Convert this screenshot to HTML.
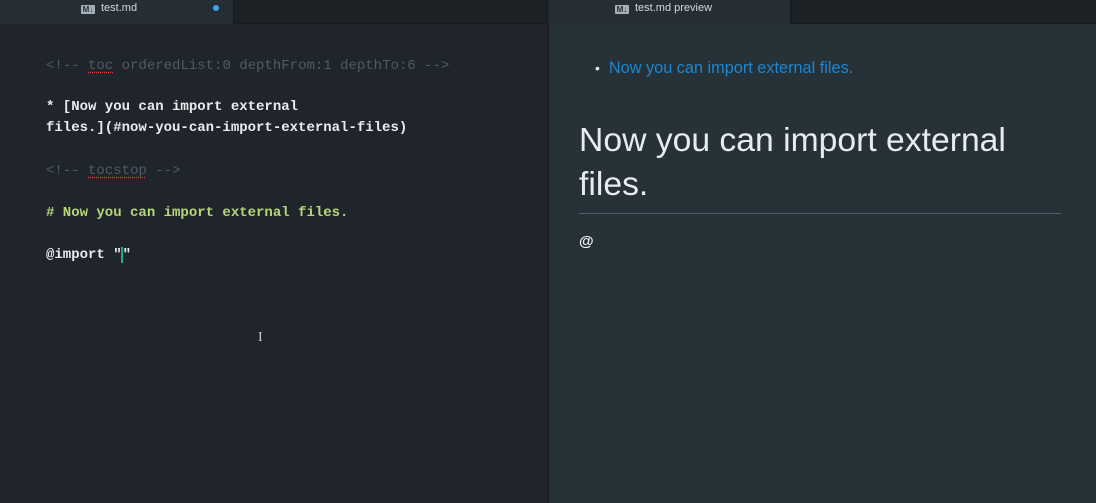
<!DOCTYPE html>
<html><head><style>
body{margin:0;width:1096px;height:503px;overflow:hidden;background:#1f252b;font-family:"Liberation Sans",sans-serif;position:relative}
.tabbar{position:absolute;top:0;height:23px;background:#1c2126;border-bottom:1px solid #161a1e}
.tab{position:absolute;top:0;height:24px;background:#252e35;color:#d4d9dd;font-size:11px;line-height:17px}
.ico{display:inline-block;width:14px;height:9px;background:#a6b0b8;border-radius:1px;vertical-align:-1px;margin-right:6px;color:#252e35;font-size:8px;line-height:9px;font-weight:bold;text-align:center}
.ed{position:absolute;left:0;top:24px;width:548px;height:479px;background:#1f252b}
.code{position:absolute;left:46px;font-family:"Liberation Mono",monospace;font-size:14px;white-space:pre;font-weight:bold}
.pv{position:absolute;left:548px;top:24px;width:548px;height:479px;background:#263238;border-left:1px solid #161a1e}
.cm{color:#4c5c68;font-weight:normal}
.sp{text-decoration:underline dotted #d23b3b;text-underline-offset:3px}
</style></head><body>
<div class="ed"></div>
<div class="tabbar" style="left:0;width:548px"></div>
<div class="tab" style="left:0;width:233px;border-right:1px solid #161a1e"><span style="position:absolute;left:81px;top:0"><span class="ico">M↓</span>test.md</span><span style="position:absolute;left:213px;top:5px;width:6px;height:6px;border-radius:3px;background:#3da5e8"></span></div>
<div class="code cm" style="top:58px">&lt;!-- <span class="sp">toc</span> orderedList:0 depthFrom:1 depthTo:6 --&gt;</div>
<div class="code" style="top:99px;color:#e8ecef">* [Now you can import external</div>
<div class="code" style="top:120px;color:#e8ecef">files.](#now-you-can-import-external-files)</div>
<div class="code cm" style="top:163px">&lt;!-- <span class="sp">tocstop</span> --&gt;</div>
<div class="code" style="top:205px;color:#b5d67a"># Now you can import external files.</div>
<div class="code" style="top:247px;color:#e8ecef">@import "<span style="border-left:2px solid #1fa898;margin-left:-1px"></span>"</div>
<div style="position:absolute;left:258px;top:330px;color:#c8ccd0;font-size:14px;font-family:'Liberation Serif',serif">I</div>
<div class="pv"></div>
<div class="tabbar" style="left:549px;width:547px"></div>
<div class="tab" style="left:549px;width:241px;border-right:1px solid #161a1e"><span style="position:absolute;left:66px;top:0"><span class="ico">M↓</span>test.md preview</span></div>
<div style="position:absolute;left:595px;top:59px;color:#1c86d1;font-size:16.3px"><span style="color:#e0e4e8;margin-right:9px;font-size:14px">•</span>Now you can import external files.</div>
<div style="position:absolute;left:579px;top:118px;color:#e8ecef;font-size:33.7px;line-height:44px;width:470px">Now you can import external files.</div>
<div style="position:absolute;left:579px;top:213px;width:482px;height:1px;background:#4e5e6a"></div>
<div style="position:absolute;left:579px;top:233px;color:#f2f4f6;font-size:15px;font-weight:bold">@</div>
</body></html>
